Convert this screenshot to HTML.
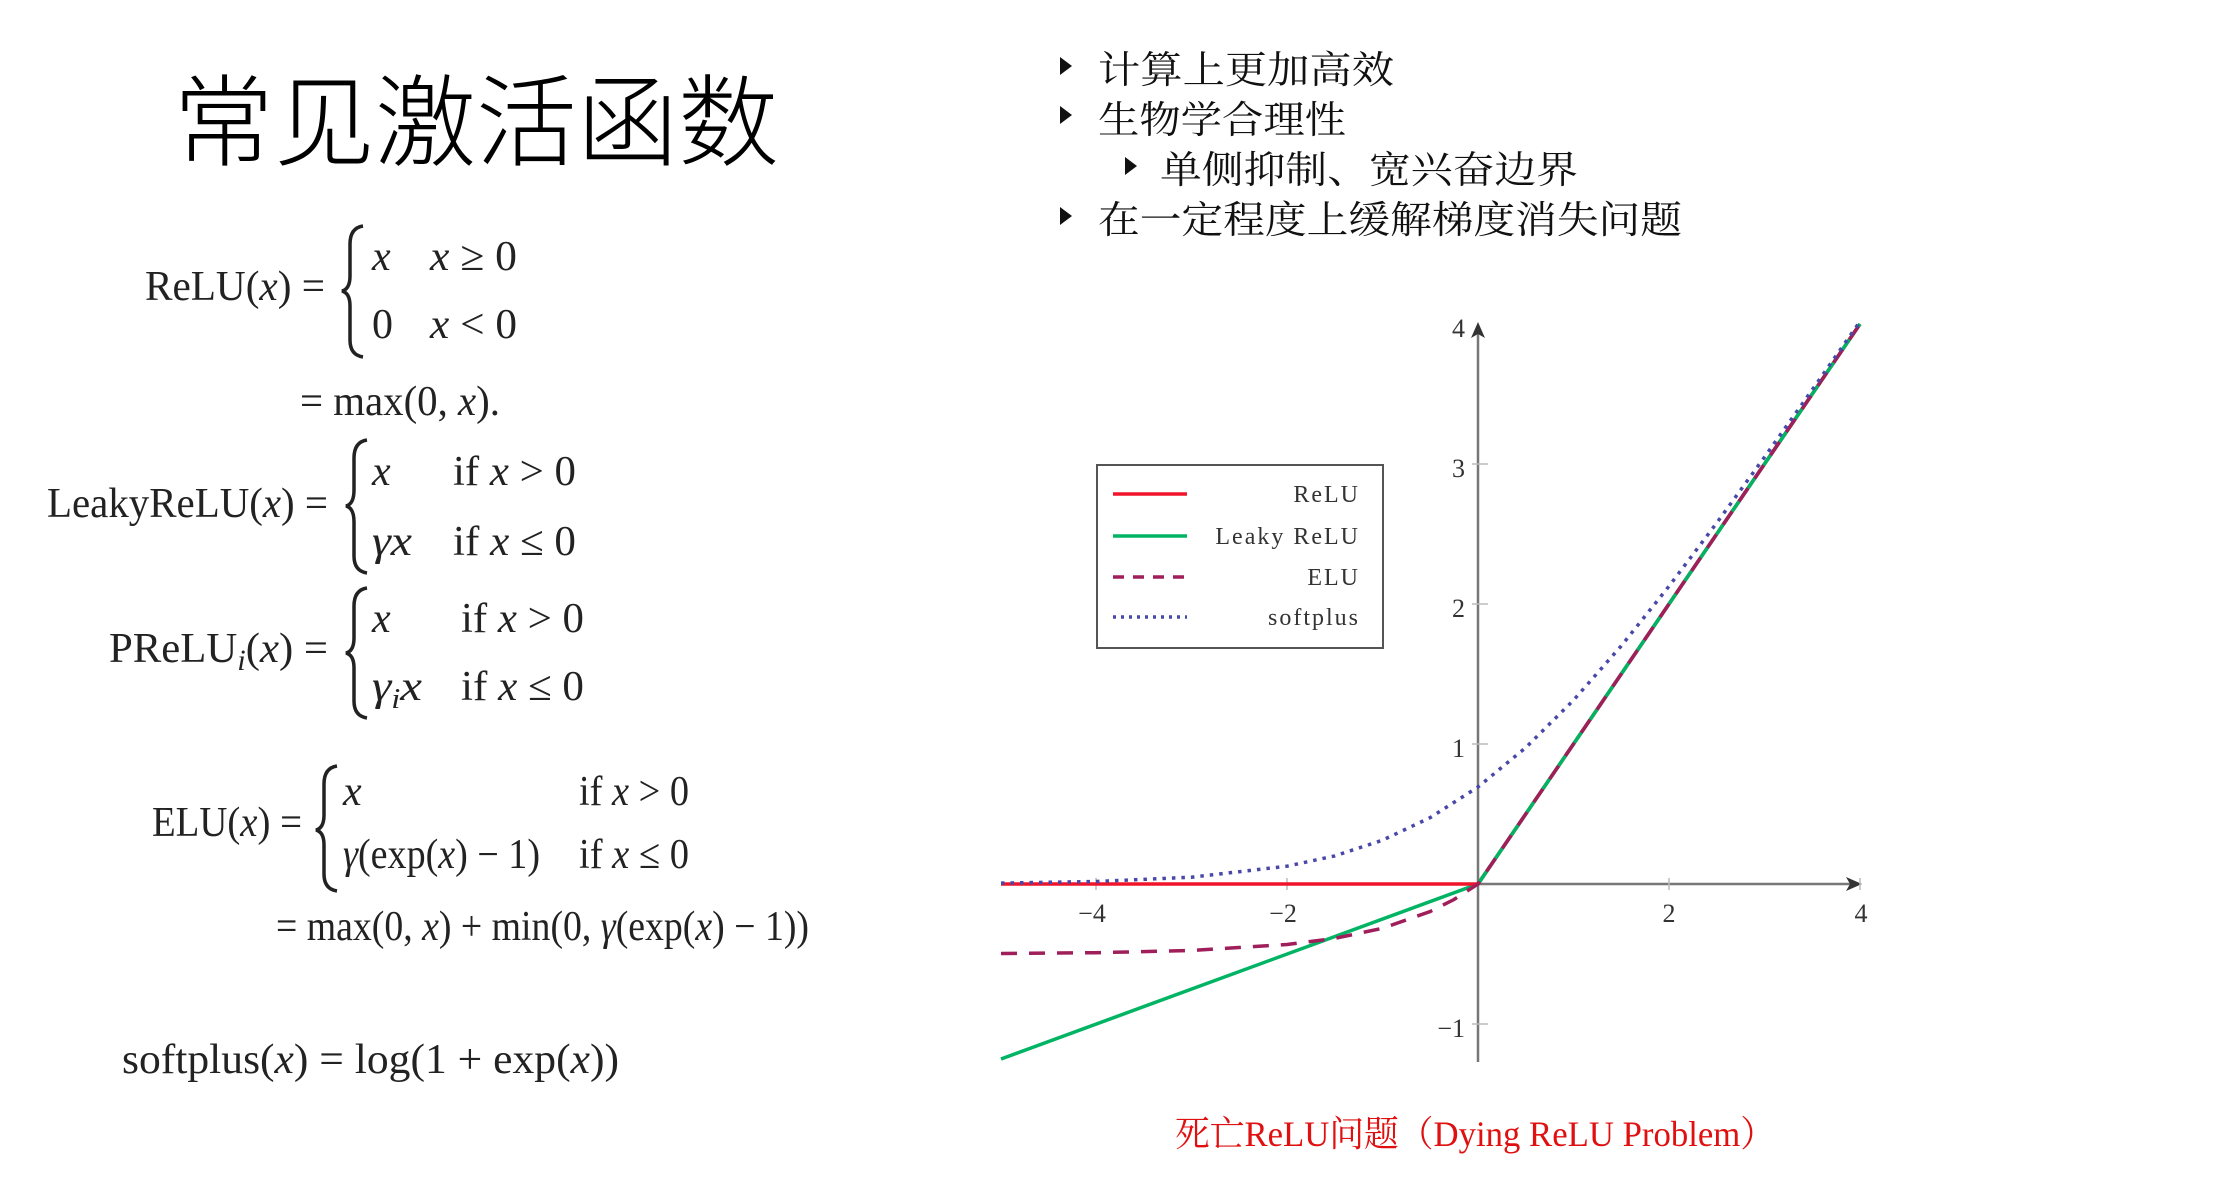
<!DOCTYPE html>
<html><head><meta charset="utf-8"><style>
html,body{margin:0;padding:0;background:#fff;}
svg{display:block}
.m{font-family:"Liberation Serif",serif;fill:#222;}
.i{font-style:italic}
.cjk{font-family:"Liberation Serif","Noto Serif CJK SC",serif;fill:#111;}
.lg{font-family:"Liberation Serif",serif;fill:#333;font-size:24px;letter-spacing:2px}
.tk{font-family:"Liberation Serif",serif;fill:#333;font-size:26px}
</style></head><body>
<svg width="2216" height="1202" viewBox="0 0 2216 1202" xmlns="http://www.w3.org/2000/svg">
<rect width="2216" height="1202" fill="#fff"/>
<text x="173" y="158" font-family="'Noto Sans CJK SC',sans-serif" font-size="100" font-weight="300" fill="#000" textLength="606" lengthAdjust="spacingAndGlyphs">常见激活函数</text>

<g class="m" font-size="42">
<text x="145" y="300" textLength="180" lengthAdjust="spacingAndGlyphs">ReLU(<tspan class="i">x</tspan>) =</text>
<path d="M363 226 Q350 228 350 244 L350 276 Q350 289 342 291 Q350 293 350 306 L350 340 Q350 355 363 357" fill="none" stroke="#222" stroke-width="3.5"/>
<text x="372" y="270" class="i">x</text>
<text x="430" y="270" textLength="87" lengthAdjust="spacingAndGlyphs"><tspan class="i">x</tspan> ≥ 0</text>
<text x="372" y="338">0</text>
<text x="430" y="338" textLength="87" lengthAdjust="spacingAndGlyphs"><tspan class="i">x</tspan> &lt; 0</text>
<text x="300" y="415" textLength="200" lengthAdjust="spacingAndGlyphs">= max(0, <tspan class="i">x</tspan>).</text>

<text x="47" y="517" textLength="281" lengthAdjust="spacingAndGlyphs">LeakyReLU(<tspan class="i">x</tspan>) =</text>
<path d="M367 440 Q354 442 354 458 L354 490 Q354 504 346 506 Q354 508 354 522 L354 556 Q354 571 367 573" fill="none" stroke="#222" stroke-width="3.5"/>
<text x="372" y="485" class="i">x</text>
<text x="453" y="485" textLength="123" lengthAdjust="spacingAndGlyphs">if <tspan class="i">x</tspan> &gt; 0</text>
<text x="372" y="555" class="i" textLength="40" lengthAdjust="spacingAndGlyphs">γx</text>
<text x="453" y="555" textLength="123" lengthAdjust="spacingAndGlyphs">if <tspan class="i">x</tspan> ≤ 0</text>

<text x="109" y="662" textLength="219" lengthAdjust="spacingAndGlyphs">PReLU<tspan class="i" font-size="30" dy="8">i</tspan><tspan dy="-8">(</tspan><tspan class="i">x</tspan>) =</text>
<path d="M367 588 Q354 590 354 606 L354 638 Q354 651 346 653 Q354 655 354 668 L354 701 Q354 716 367 718" fill="none" stroke="#222" stroke-width="3.5"/>
<text x="372" y="632" class="i">x</text>
<text x="461" y="632" textLength="123" lengthAdjust="spacingAndGlyphs">if <tspan class="i">x</tspan> &gt; 0</text>
<text x="372" y="700" class="i" textLength="50" lengthAdjust="spacingAndGlyphs">γ<tspan font-size="28" dy="8">i</tspan><tspan dy="-8">x</tspan></text>
<text x="461" y="700" textLength="123" lengthAdjust="spacingAndGlyphs">if <tspan class="i">x</tspan> ≤ 0</text>

<text x="152" y="836" textLength="150" lengthAdjust="spacingAndGlyphs">ELU(<tspan class="i">x</tspan>) =</text>
<path d="M337 766 Q324 768 324 784 L324 815 Q324 828 316 830 Q324 832 324 845 L324 874 Q324 889 337 891" fill="none" stroke="#222" stroke-width="3.5"/>
<text x="343" y="805" class="i">x</text>
<text x="579" y="805" textLength="110" lengthAdjust="spacingAndGlyphs">if <tspan class="i">x</tspan> &gt; 0</text>
<text x="343" y="868" textLength="197" lengthAdjust="spacingAndGlyphs"><tspan class="i">γ</tspan>(exp(<tspan class="i">x</tspan>) − 1)</text>
<text x="579" y="868" textLength="110" lengthAdjust="spacingAndGlyphs">if <tspan class="i">x</tspan> ≤ 0</text>
<text x="276" y="940" textLength="533" lengthAdjust="spacingAndGlyphs">= max(0, <tspan class="i">x</tspan>) + min(0, <tspan class="i">γ</tspan>(exp(<tspan class="i">x</tspan>) − 1))</text>

<text x="122" y="1073" textLength="497" lengthAdjust="spacingAndGlyphs">softplus(<tspan class="i">x</tspan>) = log(1 + exp(<tspan class="i">x</tspan>))</text>
</g>

<g fill="#111">
<path d="M1060 57 L1072 66 L1060 75 Z"/>
<path d="M1060 106 L1072 115 L1060 124 Z"/>
<path d="M1125 157 L1137 166 L1125 175 Z"/>
<path d="M1060 207 L1072 216 L1060 225 Z"/>
</g>
<g class="cjk" font-size="38" font-family="'Noto Serif CJK SC',serif">
<text x="1098" y="83" textLength="296" lengthAdjust="spacingAndGlyphs">计算上更加高效</text>
<text x="1098" y="133" textLength="248" lengthAdjust="spacingAndGlyphs">生物学合理性</text>
<text x="1160" y="183" textLength="418" lengthAdjust="spacingAndGlyphs">单侧抑制、宽兴奋边界</text>
<text x="1098" y="233" textLength="584" lengthAdjust="spacingAndGlyphs">在一定程度上缓解梯度消失问题</text>
</g>

<g stroke="#777" stroke-width="2.5" fill="none">
<line x1="1001" y1="884" x2="1856" y2="884"/>
<line x1="1478" y1="1062" x2="1478" y2="330"/>
</g>
<path d="M1862 884 L1846 877 L1850 884 L1846 891 Z" fill="#333"/>
<path d="M1478 322 L1471 338 L1478 334 L1485 338 Z" fill="#333"/>
<g stroke="#bbb" stroke-width="1.5">
<line x1="1096" y1="878" x2="1096" y2="890"/>
<line x1="1287" y1="878" x2="1287" y2="890"/>
<line x1="1669" y1="878" x2="1669" y2="890"/>
<line x1="1860" y1="878" x2="1860" y2="890"/>
<line x1="1472" y1="744" x2="1488" y2="744"/>
<line x1="1472" y1="604" x2="1488" y2="604"/>
<line x1="1472" y1="464" x2="1488" y2="464"/>
<line x1="1472" y1="1024" x2="1488" y2="1024"/>
</g>
<g class="tk" text-anchor="middle">
<text x="1092" y="922">−4</text>
<text x="1283" y="922">−2</text>
<text x="1669" y="922">2</text>
<text x="1861" y="922">4</text>
</g>
<g class="tk" text-anchor="end">
<text x="1465" y="337">4</text>
<text x="1465" y="477">3</text>
<text x="1465" y="617">2</text>
<text x="1465" y="757">1</text>
<text x="1465" y="1037">−1</text>
</g>

<polyline points="1001,1059 1478,884 1860,324" fill="none" stroke="#00b464" stroke-width="3.5"/>
<polyline points="1001,884 1478,884 1860,324" fill="none" stroke="#f0142a" stroke-width="3.5"/>
<polyline points="1478,884 1860,324" fill="none" stroke="#00b464" stroke-width="3.5"/>
<polyline points="1001,953.5 1096,952.7 1191.5,950.5 1287,944.5 1334.75,938.4 1382.5,928.3 1430.25,911.5 1454,899.5 1478,884 1860,324" fill="none" stroke="#a01e5a" stroke-width="3.5" stroke-dasharray="16,12"/>
<polyline points="1001,883.1 1096,881.5 1191.5,877.2 1287,866.2 1334.75,855.9 1382.5,840.2 1430.25,817.6 1478,787 1525.75,747.6 1573.5,700.2 1621.25,645.9 1669,586.2 1716.75,522.9 1764.5,457.1 1812.25,389.8 1860,321.5" fill="none" stroke="#4848a8" stroke-width="3.5" stroke-dasharray="3.5,6"/>

<rect x="1097" y="465" width="286" height="183" fill="#fff" stroke="#555" stroke-width="2"/>
<line x1="1113" y1="494" x2="1187" y2="494" stroke="#f0142a" stroke-width="3.5"/>
<line x1="1113" y1="536" x2="1187" y2="536" stroke="#00b464" stroke-width="3.5"/>
<line x1="1113" y1="577" x2="1187" y2="577" stroke="#a01e5a" stroke-width="3.5" stroke-dasharray="11,9"/>
<line x1="1113" y1="617" x2="1187" y2="617" stroke="#4848a8" stroke-width="3.5" stroke-dasharray="3,5"/>
<g class="lg" text-anchor="end">
<text x="1360" y="502">ReLU</text>
<text x="1360" y="544">Leaky ReLU</text>
<text x="1360" y="585">ELU</text>
<text x="1360" y="625">softplus</text>
</g>

<text x="1175" y="1146" font-family="'Liberation Serif','Noto Serif CJK SC',serif" font-size="36" fill="#e01010" textLength="600" lengthAdjust="spacingAndGlyphs">死亡ReLU问题（Dying ReLU Problem）</text>
</svg>
</body></html>
